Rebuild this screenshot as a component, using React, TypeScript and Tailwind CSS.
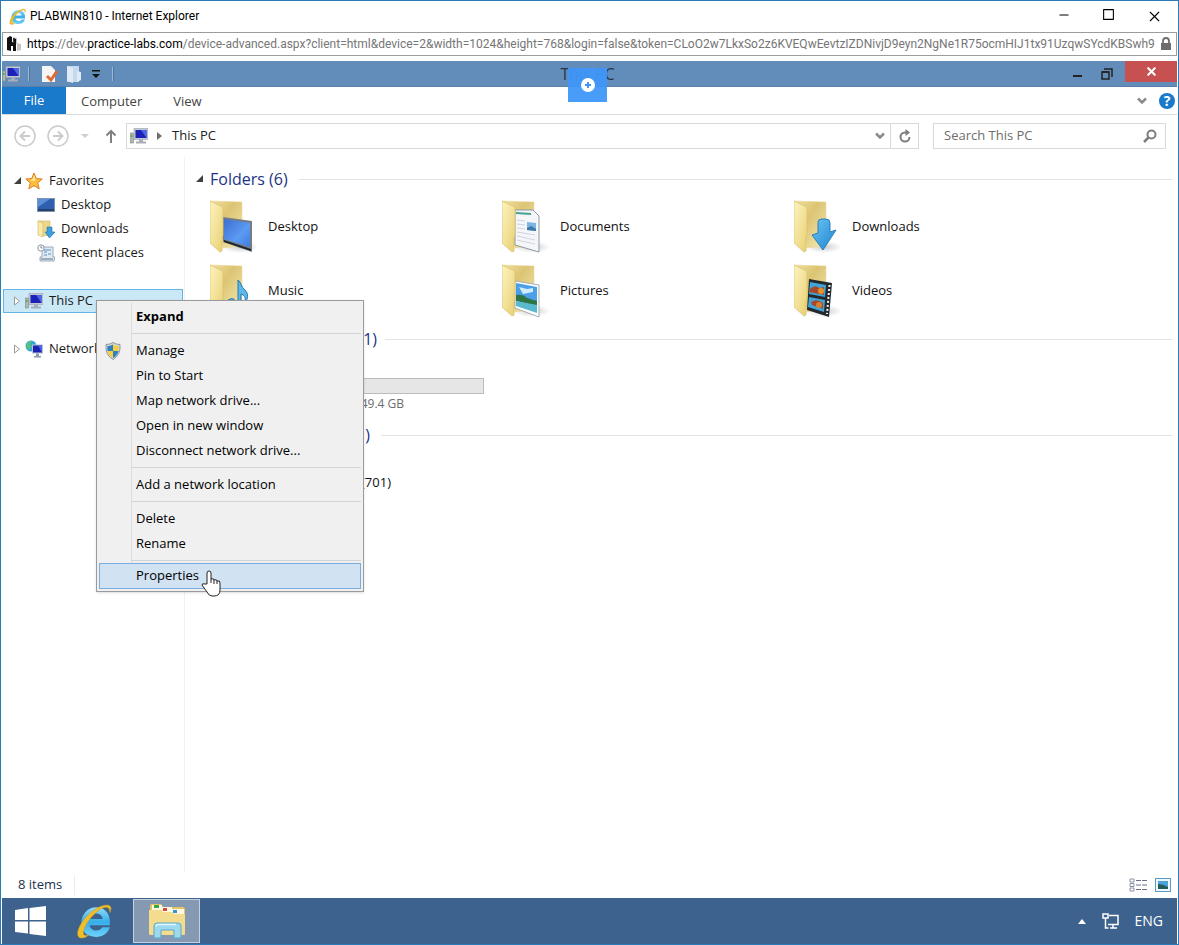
import React from "react";
import { Minus, Square, X } from "lucide-react";

type Kind = "desktop" | "documents" | "downloads" | "music" | "pictures" | "videos";

const folders: { name: string; kind: Kind }[] = [
  { name: "Desktop", kind: "desktop" },
  { name: "Documents", kind: "documents" },
  { name: "Downloads", kind: "downloads" },
  { name: "Music", kind: "music" },
  { name: "Pictures", kind: "pictures" },
  { name: "Videos", kind: "videos" },
];

const menuGroups = [
  ["Manage", "Pin to Start", "Map network drive...", "Open in new window", "Disconnect network drive..."],
  ["Add a network location"],
  ["Delete", "Rename"],
];

/* ================= ICONS ================= */

function IeLogo({ className }: { className: string }) {
  return (
    <svg viewBox="0 0 34 34" fill="none" className={className}>
      <defs>
        <linearGradient id="ieBlue" x1="0" y1="0" x2="0" y2="1">
          <stop offset="0" stopColor="#8fdcfa" />
          <stop offset="0.5" stopColor="#35aeea" />
          <stop offset="1" stopColor="#6fd2fa" />
        </linearGradient>
      </defs>
      <path
        d="M32 21H13c0 3 3 5 6 5 3 0 4-1 6-3h7c-2 6-7 9-13 9C10 32 5 27 5 19S11 4 19 4c9 0 14 7 13 17ZM13 15h12c0-3-3-5-6-5s-6 2-6 5Z"
        fill="url(#ieBlue)"
        fillRule="evenodd"
      />
      <path
        d="M32 9c2-4 1-7-3-7C22 2 10 10 4 21c-4 7-3 13 2 12 2 0 4-1 6-3-3 1-5 1-5-2 0-6 8-17 16-22 5-3 9-3 9 3Z"
        fill="#eebf2a"
        stroke="#cf9a1c"
        strokeWidth="0.5"
      />
    </svg>
  );
}

function PcIcon({ className }: { className: string }) {
  return (
    <svg viewBox="0 0 18 16" className={className}>
      <rect x="0.5" y="5" width="3" height="10" fill="#aeb8ae" stroke="#7d8a80" strokeWidth="0.6" />
      <rect x="1" y="7" width="1.5" height="2" fill="#4fae4a" />
      <rect x="4" y="0.5" width="14" height="11" fill="#c3c9d3" stroke="#98a1b0" strokeWidth="0.6" />
      <rect x="5.5" y="2" width="11" height="8" fill="#1b22b5" />
      <path d="M11 2h5.500v8z" fill="#4a66e8" />
      <path d="M9 11.500h4v2h3v2H6v-2h3z" fill="#a6aeba" />
    </svg>
  );
}

function Overlay({ kind }: { kind: Kind }) {
  switch (kind) {
    case "desktop":
      return (
        <>
          <path d="M13 17l29 4v31l-29-10z" fill="#747d87" />
          <path d="M14 19l26 4v24l-26-8z" fill="url(#screen)" />
          <path d="M14 40l27 9v2l-27-9z" fill="#20252b" />
        </>
      );
    case "documents":
      return (
        <>
          <path d="M13 10h18l6 6v36l-24-7z" fill="#f4f6fa" stroke="#8d98a8" />
          <path d="M14 13l15 1" stroke="#48a08e" strokeWidth="2" />
          <path d="M15 20l8 1M15 24l8 1M15 28l8 1M15 32l18 3M15 36l18 4M15 40l18 4" stroke="#d0d3e0" />
          <path d="M25 22l9 1v8l-9-1z" fill="#7db5e2" />
          <path d="M25 28l4-2 5 3v2l-9-1z" fill="#3d79a8" />
        </>
      );
    case "downloads":
      return (
        <path
          d="M24 22q0-3 4-3h4q4 0 4 4v9l6-2-13 20-11-15 6-2z"
          fill="url(#arrow)"
          stroke="#2d7fb8"
          strokeLinejoin="round"
        />
      );
    case "music":
      return (
        <g fill="#5cb8ea" stroke="#2577b0">
          <path d="M28 16c3 2 3 7 7 10 4 4 3 9 0 12 1-5-1-7-4-8v11q-1 6-5 4c-3-2 0-6 2-6z" />
          <path d="M18 36q3-2 6-1v5q-3 4-6 2-3-2 0-6z" />
        </g>
      );
    case "pictures":
      return (
        <>
          <path d="M13 17l24 4v32l-24-9z" fill="#fff" stroke="#a3adb8" />
          <path d="M14 19l21 4v15l-21-1z" fill="#4b9fe6" />
          <path d="M17 23l8 2 6-1v4l-10 2z" fill="#d2ebfa" />
          <path d="M14 31q7-1 11 3l10 3v5l-21-5z" fill="#2e7545" />
          <path d="M14 37l21 4v8l-21-7z" fill="#5ab8cf" />
        </>
      );
    default:
      return (
        <>
          <path d="M15 15l23 4-3 34-22-7z" fill="#23292e" />
          <path d="M16 18l16 3-1 12-16-3zM15 33l16 3-1 12-16-5z" fill="#41a5d9" />
          <path d="M16 25q5-5 9-1l5-1v8l-15-3zM17 38q6-4 12 1v6l-11-4z" fill="#a7492a" />
          <circle cx="27" cy="27" r="3" fill="#e6932e" />
          <circle cx="25" cy="41" r="3" fill="#d48132" />
          <path d="M35.500 21l-2.500 29" stroke="#f3f3f3" strokeWidth="2" strokeDasharray="2 2" />
        </>
      );
  }
}

function FolderIcon({ kind }: { kind: Kind }) {
  return (
    <svg viewBox="0 0 48 54" className="h-[54px] w-12 shrink-0">
      <defs>
        <linearGradient id="back" x1="0" y1="0" x2="1" y2="1">
          <stop offset="0" stopColor="#f0e2a0" />
          <stop offset="0.4" stopColor="#dcc473" />
          <stop offset="1" stopColor="#f6ebb4" />
        </linearGradient>
        <linearGradient id="flap" x1="0" y1="0" x2="1" y2="1">
          <stop offset="0" stopColor="#fdf4c2" />
          <stop offset="1" stopColor="#e8cf70" />
        </linearGradient>
        <linearGradient id="screen" x1="0" y1="0" x2="1" y2="1">
          <stop offset="0" stopColor="#3a6fd0" />
          <stop offset="0.6" stopColor="#5c9af3" />
          <stop offset="1" stopColor="#3f7de0" />
        </linearGradient>
        <linearGradient id="arrow" x1="0" y1="0" x2="1" y2="1">
          <stop offset="0" stopColor="#6cc4f4" />
          <stop offset="1" stopColor="#1d85d0" />
        </linearGradient>
        <radialGradient id="shade">
          <stop offset="0" stopColor="#9a9a9a" stopOpacity="0.5" />
          <stop offset="1" stopColor="#9a9a9a" stopOpacity="0" />
        </radialGradient>
      </defs>
      <ellipse cx="30" cy="47" rx="18" ry="6" fill="url(#shade)" />
      <path d="M0 1l32 1v44l-19 2z" fill="url(#back)" stroke="#e6d592" strokeWidth="0.5" />
      <Overlay kind={kind} />
      <path d="M0 1l13 6v28l-1 3v13l-2 1L0 43z" fill="url(#flap)" stroke="#d9c06c" strokeWidth="0.7" />
    </svg>
  );
}

function StarIcon() {
  return (
    <svg viewBox="0 0 18 18" className="h-[18px] w-[18px]">
      <path d="M9 1l2.300 5.500 5.900.5-4.500 3.900 1.500 5.900L9 13.700l-5.200 3.100 1.500-5.900L.8 7l5.900-.5z" fill="#fbbf3a" stroke="#e07c24" />
      <path d="M9 3l1.500 4.500L9 9 4 8l3.500-.5z" fill="#fde9a0" />
    </svg>
  );
}

function DesktopIcon() {
  return (
    <svg viewBox="0 0 18 14" className="h-[14px] w-[18px]">
      <rect x="0.500" y="0.500" width="17" height="13" fill="#305fb0" stroke="#7d93b4" />
      <path d="M1 1h12L1 9z" fill="#5c8fd8" />
      <rect x="1" y="11" width="16" height="2" fill="#27406b" />
    </svg>
  );
}

function DownloadsIcon() {
  return (
    <svg viewBox="0 0 18 18" className="h-[18px] w-[18px]">
      <path d="M1 1h12v14l-8 1z" fill="#eed98a" stroke="#cfb35c" strokeWidth="0.600" />
      <path d="M1 1l5 2v14l-5-2z" fill="#f8eaa8" stroke="#cfb35c" strokeWidth="0.600" />
      <path d="M10 7h5v5h3l-5.500 6L8 12h2z" fill="#3c9fe0" stroke="#1f72ad" strokeWidth="0.600" />
    </svg>
  );
}

function RecentIcon() {
  return (
    <svg viewBox="0 0 18 18" className="h-[18px] w-[18px]">
      <path d="M5 3h11v10h2l-1 4H3v-4h2z" fill="#e2e9f1" stroke="#8797aa" strokeWidth="0.800" />
      <path d="M7 6h7M7 8h3M11 10h3M7 11h3" stroke="#5594cc" />
      <path d="M4 15h12" stroke="#8797aa" strokeWidth="1.500" />
      <circle cx="4" cy="4" r="3.200" fill="#fff" stroke="#8a949f" />
      <path d="M4 2v2h1.500" stroke="#666" strokeWidth="0.800" fill="none" />
    </svg>
  );
}

function NetworkIcon() {
  return (
    <svg viewBox="0 0 18 18" className="h-[18px] w-[18px]">
      <circle cx="6" cy="6" r="5.500" fill="#3aa4d6" />
      <path d="M2 3q3-3 5-2L5 4l2 2-3 4Q0 7 2 3z" fill="#55c278" />
      <rect x="7" y="4.500" width="11" height="9" fill="#bcc5d2" />
      <rect x="8" y="5.500" width="9" height="7" fill="#1b22b5" />
      <path d="M13 5.500h4v7z" fill="#4a66e8" />
      <path d="M11 13.500h3V16h2v1.500H9V16h2z" fill="#8f9aaa" />
    </svg>
  );
}

function ShieldIcon() {
  return (
    <svg viewBox="0 0 16 18" className="h-[18px] w-4">
      <path d="M8 .5q3 2 7 2Q16 13 8 17.500 0 13 1 2.500q4 0 7-2z" fill="#d5dadd" stroke="#858d93" strokeWidth="0.900" />
      <path d="M8 2.500V9H2.500q-.5-3 0-5Q5 4 8 2.500z" fill="#2f7fc4" />
      <path d="M8 2.500V9h5.500q.5-3 0-5Q11 4 8 2.500z" fill="#f5cf3c" />
      <path d="M8 9H2.500Q3.500 13.500 8 16z" fill="#f5cf3c" />
      <path d="M8 9h5.500Q12.500 13.500 8 16z" fill="#2f7fc4" />
    </svg>
  );
}

function NavArrow({ flip }: { flip?: boolean }) {
  return (
    <svg viewBox="0 0 22 22" fill="none" stroke="#cbcbcb" className="h-[22px] w-[22px]">
      <circle cx="11" cy="11" r="10" strokeWidth="1.500" />
      <path d={flip ? "M6 11h9M11 6.500l4.500 4.500L11 15.500" : "M16 11H7M11 6.500L6.500 11l4.500 4.500"} strokeWidth="2" />
    </svg>
  );
}

function Chevron() {
  return (
    <svg viewBox="0 0 10 8" fill="none" className="h-2 w-2.5">
      <path d="M1 1.500l4 4 4-4" stroke="#8a8a8a" strokeWidth="2.500" />
    </svg>
  );
}

function OpenTriangle() {
  return (
    <svg viewBox="0 0 8 8" className="h-2 w-2 shrink-0">
      <path d="M8 0v7H1z" fill="#404040" />
    </svg>
  );
}

function ClosedTriangle() {
  return (
    <svg viewBox="0 0 8 10" className="h-2.5 w-2 shrink-0">
      <path d="M1.500 1l5 4-5 4z" fill="#fff" stroke="#9a9a9a" />
    </svg>
  );
}

function WindowsLogo() {
  return (
    <svg viewBox="0 0 31 30" className="h-[30px] w-[31px]" fill="#fff">
      <path d="M0 4l13-2v12H0zM14.500 2L31 0v14H14.500zM0 15.500h13v12L0 26zM14.500 15.500H31V30l-16.500-2z" />
    </svg>
  );
}

function ExplorerIcon() {
  return (
    <svg viewBox="0 0 38 36" className="h-9 w-[38px]">
      <path d="M2 3q0-2 2-2h9l2 3h20q2 0 2 2v25q0 1-2 1H4q-2 0-2-1z" fill="#e3c467" />
      <path d="M4 2h10v5H4zM14 4h10v5H14zM24 6h12v5H24z" fill="#fff8e0" />
      <rect x="6" y="2" width="5" height="3" fill="#35a944" />
      <rect x="15" y="5" width="4" height="3" fill="#d64a3c" />
      <rect x="25" y="7" width="4" height="3" fill="#3593d4" />
      <path d="M1 7h12l2 2h9l2 2h11v20q0 1-2 1H3q-2 0-2-1z" fill="#f3dc8e" />
      <path d="M6 35V23q0-3 3-3h21q3 0 3 3v12h-7v-8H13v8z" fill="#9cd9ef" stroke="#5aa7cc" />
      <path d="M8 23.500q0-2 2-2h18" stroke="#e2f7fd" strokeWidth="1.500" fill="none" />
    </svg>
  );
}

/* ================= PARTS ================= */

function BrowserBar() {
  return (
    <header className="font-[Roboto,sans-serif]">
      <div className="flex h-[30px] items-center bg-white pl-2">
        <IeLogo className="h-[17px] w-[17px]" />
        <h1 className="ml-1 flex-1 text-xs text-black">PLABWIN810 - Internet Explorer</h1>
        <div className="flex text-black">
          <button aria-label="Minimize" className="flex w-[45px] justify-center">
            <Minus size={14} strokeWidth={2} />
          </button>
          <button aria-label="Maximize" className="flex w-[45px] justify-center">
            <Square size={13} strokeWidth={2} className="[&_rect]:[rx:0]" />
          </button>
          <button aria-label="Close" className="flex w-[47px] justify-center">
            <X size={17} strokeWidth={1.5} />
          </button>
        </div>
      </div>
      <div className="mx-px mt-px flex h-6 items-center border border-[#9c9c9c] bg-white px-1">
        <svg viewBox="0 0 15 16" className="h-4 w-[15px] shrink-0">
          <path d="M0 2l3-2 2 1v5l4 1v8H6v-5H4v5L0 14z" fill="#111" />
          <path d="M6 1l4 1v5l4 1v6l-4 1V8L6 6z" fill="#c4c4c4" />
          <path d="M6 2l3 1v12H7z" fill="#111" />
        </svg>
        <div
          role="textbox"
          aria-label="Address"
          tabIndex={0}
          className="mx-[5px] min-w-0 flex-1 overflow-hidden text-xs whitespace-nowrap text-[#767676]"
        >
          <span className="text-black">https</span>://dev.<span className="text-black">practice-labs.com</span>
          /device-advanced.aspx?client=html&amp;device=2&amp;width=1024&amp;height=768&amp;login=false&amp;token=CLoO2w7LkxSo2z6KVEQwEevtzIZDNivjD9eyn2NgNe1R75ocmHIJ1tx91UzqwSYcdKBSwh950
        </div>
        <svg viewBox="0 0 12 14" className="h-3.5 w-3 shrink-0">
          <path d="M3 6V4q0-3 3-3t3 3v2" fill="none" stroke="#6d6d6d" strokeWidth="1.800" />
          <rect x="1" y="6" width="10" height="7" fill="#6d6d6d" />
        </svg>
      </div>
    </header>
  );
}

function TitleBar() {
  return (
    <div className="relative mt-[5px] flex h-[26px] items-center border-b border-[#587fa9] bg-[#628cb9]">
      <div className="flex flex-1 items-center">
        <PcIcon className="h-4 w-[18px]" />
        <span className="ml-2 h-3.5 w-0.5 border-l border-[#9db9d6] bg-[#4d759f]" />
        <button aria-label="Properties" className="ml-3">
          <svg viewBox="0 0 16 18" className="h-[18px] w-4">
            <path d="M0 1h9l4 4v12H0z" fill="#f5f5f5" />
            <path d="M5 11l4 4 6-9" fill="none" stroke="#e06a34" strokeWidth="3" />
          </svg>
        </button>
        <button aria-label="New folder" className="ml-2">
          <svg viewBox="0 0 16 18" className="h-[18px] w-4">
            <path d="M1 1h12v16H1z" fill="#c5d8ec" />
            <path d="M1 1l6 2v15l-6-2zM11 6l4 1v8l-4 2z" fill="#dfeaf6" />
          </svg>
        </button>
        <button aria-label="Customize toolbar" className="ml-2.5">
          <svg viewBox="0 0 8 8" className="h-2 w-2">
            <path d="M0 0h8v1.500H0zM0 4h8L4 8z" fill="#111" />
          </svg>
        </button>
        <span className="ml-3 h-3.5 w-0.5 border-l border-[#9db9d6] bg-[#4d759f]" />
      </div>
      <h2 className="mr-1 text-base text-[#26364a]">This PC</h2>
      <div className="flex flex-1 items-center justify-end self-stretch">
        <button aria-label="Minimize window" className="flex w-[30px] justify-center">
          <span className="mt-1 h-0.5 w-[9px] bg-[#222]" />
        </button>
        <button aria-label="Restore window" className="flex w-[30px] justify-center">
          <svg viewBox="0 0 12 12" fill="none" stroke="#222" className="h-3 w-3">
            <path d="M1 4h7v7H1z" strokeWidth="1.500" />
            <path d="M1 4h7M3 1h8v8" strokeWidth="1.500" />
          </svg>
        </button>
        <button
          aria-label="Close window"
          className="ml-[3px] flex h-[21px] w-[52px] items-center justify-center self-start bg-[#c75050] text-white"
        >
          <X size={13} strokeWidth={4} />
        </button>
      </div>
      <button
        aria-label="Show toolbar"
        className="absolute top-[7px] left-[566px] flex h-[34px] w-[39px] items-center justify-center bg-[#3f97f8]/95"
      >
        <svg viewBox="0 0 14 14" className="h-3.5 w-3.5">
          <circle cx="7" cy="7" r="7" fill="#fff" />
          <path d="M7 4v6M4 7h6" stroke="#3f97f8" strokeWidth="2" />
        </svg>
      </button>
    </div>
  );
}

function RibbonTabs() {
  return (
    <nav className="flex h-7 items-center border-b border-[#dadbdc] text-[#444]">
      <button className="h-[27px] w-16 bg-[#1979ca] text-white">File</button>
      <button className="ml-[15px] pt-[3px]">Computer</button>
      <button className="ml-[31px] pt-[3px]">View</button>
      <div className="ml-auto flex items-center gap-3 pr-0.5">
        <button aria-label="Expand ribbon">
          <Chevron />
        </button>
        <button aria-label="Help" className="h-4 w-4 rounded-full bg-[#1979ca] text-sm leading-4 font-bold text-white">
          ?
        </button>
      </div>
    </nav>
  );
}

function AddressRow() {
  return (
    <div className="flex h-[42px] items-center pr-[11px] pl-3">
      <button aria-label="Back">
        <NavArrow />
      </button>
      <button aria-label="Forward" className="ml-[11px]">
        <NavArrow flip />
      </button>
      <button aria-label="Recent locations" className="ml-3">
        <svg viewBox="0 0 8 4" className="h-1 w-2">
          <path d="M0 0h8L4 4z" fill="#cfcfcf" />
        </svg>
      </button>
      <button aria-label="Up" className="ml-4">
        <svg viewBox="0 0 12 14" fill="none" stroke="#808080" className="h-3.5 w-3">
          <path d="M6 14V2M1.500 6.500L6 2l4.500 4.500" strokeWidth="2" />
        </svg>
      </button>
      <div className="ml-[9px] flex h-[26px] min-w-0 flex-1 items-center border border-[#d9d9d9] pl-[3px]">
        <PcIcon className="h-4 w-[18px]" />
        <svg viewBox="0 0 5 8" className="ml-[9px] h-2 w-[5px]">
          <path d="M0 0l5 4-5 4z" fill="#6d6d6d" />
        </svg>
        <button className="ml-2.5 text-[#222]">This PC</button>
        <button aria-label="Previous locations" className="mr-[5px] ml-auto">
          <Chevron />
        </button>
        <button aria-label="Refresh" className="flex w-7 items-center justify-center self-stretch border-l border-[#d9d9d9]">
          <svg viewBox="0 0 12 14" fill="none" className="h-3.5 w-3">
            <path d="M10.500 8A4.500 4.500 0 1 1 6 3.500h2" stroke="#7d7d7d" strokeWidth="2" />
            <path d="M6.500 0v7L11 3.500z" fill="#7d7d7d" />
          </svg>
        </button>
      </div>
      <label className="ml-3.5 flex h-[26px] w-[233px] items-center border border-[#d9d9d9] pr-2 pl-2.5">
        <input
          aria-label="Search This PC"
          placeholder="Search This PC"
          className="min-w-0 flex-1 outline-none placeholder:text-[#6d6d6d]"
        />
        <svg viewBox="0 0 14 14" fill="none" stroke="#7d7d7d" className="h-3.5 w-3.5">
          <circle cx="8.500" cy="5.500" r="4" strokeWidth="2" />
          <path d="M5.500 8.500L1 13" strokeWidth="2.500" />
        </svg>
      </label>
    </div>
  );
}

function NavTree() {
  return (
    <aside className="w-[183px] shrink-0 border-r border-[#f1f1f1] pt-3 text-[#1a1a1a]">
      <ul>
        <li>
          <div className="flex h-6 items-center pl-[11px]">
            <OpenTriangle />
            <span className="mr-1.5 ml-1">
              <StarIcon />
            </span>
            Favorites
          </div>
          <ul className="pl-[35px]">
            <li className="flex h-6 items-center gap-1.5">
              <DesktopIcon />
              Desktop
            </li>
            <li className="flex h-6 items-center gap-1.5">
              <DownloadsIcon />
              Downloads
            </li>
            <li className="flex h-6 items-center gap-1.5">
              <RecentIcon />
              Recent places
            </li>
          </ul>
        </li>
        <li className="mt-6 mr-px ml-px flex h-6 items-center border border-[#63b5e6] bg-[#cbe8f6] pl-[9px]">
          <ClosedTriangle />
          <PcIcon className="mr-1.5 ml-1 h-4 w-[18px]" />
          This PC
        </li>
        <li className="mt-6 flex h-6 items-center pl-[11px]">
          <ClosedTriangle />
          <span className="mr-1.5 ml-1">
            <NetworkIcon />
          </span>
          Network
        </li>
      </ul>
    </aside>
  );
}

function GroupHeading({ label, className }: { label: string; className: string }) {
  return (
    <div className="flex h-8 items-center">
      <OpenTriangle />
      <h3 className={`ml-[7px] shrink-0 text-base whitespace-nowrap text-[#1e3287] ${className}`}>{label}</h3>
      <span className="ml-2 h-px flex-1 bg-[#e4e4e4]" />
    </div>
  );
}

function FileList() {
  return (
    <main className="min-w-0 flex-1 pt-1.5 pr-[5px] pl-2.5 text-[#111]">
      <GroupHeading label="Folders (6)" className="w-[81px]" />
      <ul className="grid grid-cols-[repeat(auto-fill,292px)] pl-[15px]">
        {folders.map((folder) => (
          <li key={folder.name} className="flex h-16 items-center gap-2.5">
            <FolderIcon kind={folder.kind} />
            {folder.name}
          </li>
        ))}
      </ul>

      <GroupHeading label="Devices and drives (1)" className="w-[167px] text-right" />
      <div className="flex h-16 flex-col pl-[73px]">
        <span className="h-[23px] leading-5">Local Disk (C:)</span>
        <div className="h-4 w-[216px] border border-[#bcbcbc] bg-[#e6e6e6]" />
        <span className="w-[136px] text-right text-xs leading-5 whitespace-nowrap text-[#6d6d6d]">40.1 GB free of 49.4 GB</span>
      </div>

      <GroupHeading label="Network locations (1)" className="w-[163px] pr-[3px] text-right" />
      <div className="flex h-16 items-center pl-[73px]">
        <span className="w-[123px] text-right whitespace-nowrap">plabdm (701)</span>
      </div>
    </main>
  );
}

function ContextMenu() {
  return (
    <div
      role="menu"
      className="absolute top-[299px] left-[95px] w-[268px] border border-[#9b9b9b] bg-[#f0f0f0] p-0.5 text-black shadow-sm"
    >
      <div className="relative">
        <span className="absolute inset-y-0 left-8 w-px bg-[#dcdcdc]" />
        <button role="menuitem" className="block h-[26px] w-full pt-0.5 pl-[37px] text-left font-bold">
          Expand
        </button>
        {menuGroups.map((group) => (
          <div key={group[0]} className="pt-[7px]">
            <hr className="-mt-[3px] mb-1 ml-8 border-[#d4d4d4]" />
            {group.map((item) => (
              <button key={item} role="menuitem" className="flex h-[25px] w-full items-center text-left">
                <span className="flex w-[37px] pl-1.5">{item === "Manage" && <ShieldIcon />}</span>
                {item}
              </button>
            ))}
          </div>
        ))}
        <hr className="mt-1 mb-0.5 ml-8 border-[#d4d4d4]" />
        <button
          role="menuitem"
          className="relative block h-[26px] w-full border border-[#78aede] bg-[#d1e2f2] pl-9 text-left"
        >
          Properties
          <svg viewBox="0 0 20 27" className="absolute top-1.5 left-[101px] h-[27px] w-5">
            <path
              d="M6 14V3q0-2 2-2t2 2v6q3-1 3 1 3-1 3 1 3-1 3 2v7q0 6-6 6h-2q-3 0-5-4l-5-7q0-2 3-1z"
              fill="#fff"
              stroke="#222"
            />
            <path d="M10 9v4M13 10v4M16 11v3" stroke="#222" />
          </svg>
        </button>
      </div>
    </div>
  );
}

function StatusBar() {
  return (
    <footer className="flex h-[26px] items-center pr-1.5 pl-4 text-[#1e3250]">
      <span className="border-r border-[#ececec] pr-3">8 items</span>
      <button aria-label="Details view" className="ml-auto">
        <svg viewBox="0 0 18 14" className="h-3.5 w-[18px]">
          <path d="M1 1h4v3H1zM1 5.500h4v3H1zM1 10h4v3H1z" fill="#fff" stroke="#8b93a5" />
          <path d="M7 2.500h5M13 2.500h5M7 7h5M13 7h5M7 11.500h5M13 11.500h5" stroke="#6a7184" />
        </svg>
      </button>
      <button aria-label="Large icons view" className="ml-2">
        <svg viewBox="0 0 16 14" className="h-3.5 w-4">
          <rect x="0.500" y="0.500" width="15" height="13" fill="#eef7fc" stroke="#5b9ac4" />
          <path d="M3 3h10v8H3z" fill="#4ba3dc" />
          <path d="M3 6q5 0 10 3v2H3z" fill="#245b58" />
        </svg>
      </button>
    </footer>
  );
}

function Taskbar() {
  return (
    <footer className="flex h-[46px] items-center bg-[#3d628d] pl-[13px] text-white">
      <button aria-label="Start">
        <WindowsLogo />
      </button>
      <button aria-label="Internet Explorer" className="ml-[30px]">
        <IeLogo className="h-9 w-9" />
      </button>
      <button
        aria-label="File Explorer"
        className="ml-[21px] flex h-11 w-[67px] items-center justify-center border border-[#c5d1de] bg-[#8599b2]"
      >
        <ExplorerIcon />
      </button>
      <button aria-label="Show hidden icons" className="ml-auto">
        <svg viewBox="0 0 8 5" className="h-[5px] w-2">
          <path d="M0 5h8L4 0z" fill="#fff" />
        </svg>
      </button>
      <svg viewBox="0 0 17 16" fill="none" stroke="#fff" className="ml-4 h-4 w-[17px]">
        <path d="M7 2.500h9v9H6M11 11.500V15M8 15h7" strokeWidth="1.500" />
        <path d="M1 1h5v4H1zM3.500 5v10h3" strokeWidth="1.500" />
      </svg>
      <button className="mr-3.5 ml-4 text-sm">ENG</button>
    </footer>
  );
}

export default function App() {
  return (
    <div className="relative flex min-h-screen flex-col border border-[#2a7ab8] bg-white font-['Open_Sans',sans-serif] text-[13px]">
      <BrowserBar />
      <div className="flex flex-1 flex-col px-px">
        <TitleBar />
        <RibbonTabs />
        <AddressRow />
        <div className="flex flex-1">
          <NavTree />
          <FileList />
        </div>
        <StatusBar />
        <Taskbar />
      </div>
      <ContextMenu />
    </div>
  );
}
